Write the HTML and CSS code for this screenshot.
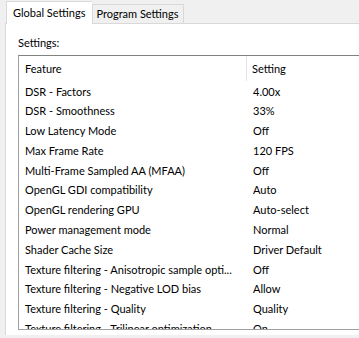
FILE: index.html
```html
<!DOCTYPE html>
<html>
<head>
<meta charset="utf-8">
<link rel="stylesheet" href="styles.css">
</head>
<body>
<div class="window">
  <div class="tabs">
    <div class="tab active">Global Settings</div>
    <div class="tab">Program Settings</div>
  </div>
  <div class="panel">
    <div class="label">Settings:</div>
    <div class="list">
      <div class="row header"><div class="c1">Feature</div><div class="c2">Setting</div></div>
      <div class="row"><div class="c1">DSR - Factors</div><div class="c2">4.00x</div></div>
      <div class="row"><div class="c1">DSR - Smoothness</div><div class="c2">33%</div></div>
      <div class="row"><div class="c1">Low Latency Mode</div><div class="c2">Off</div></div>
      <div class="row"><div class="c1">Max Frame Rate</div><div class="c2">120 FPS</div></div>
      <div class="row"><div class="c1">Multi-Frame Sampled AA (MFAA)</div><div class="c2">Off</div></div>
      <div class="row"><div class="c1">OpenGL GDI compatibility</div><div class="c2">Auto</div></div>
      <div class="row"><div class="c1">OpenGL rendering GPU</div><div class="c2">Auto-select</div></div>
      <div class="row"><div class="c1">Power management mode</div><div class="c2">Normal</div></div>
      <div class="row"><div class="c1">Shader Cache Size</div><div class="c2">Driver Default</div></div>
      <div class="row"><div class="c1">Texture filtering - Anisotropic sample opti...</div><div class="c2">Off</div></div>
      <div class="row"><div class="c1">Texture filtering - Negative LOD bias</div><div class="c2">Allow</div></div>
      <div class="row"><div class="c1">Texture filtering - Quality</div><div class="c2">Quality</div></div>
      <div class="row"><div class="c1">Texture filtering - Trilinear optimization</div><div class="c2">On</div></div>
    </div>
  </div>
</div>
</body>
</html>
```
FILE: styles.css
```css
html, body {
  margin: 0;
  padding: 0;
  background: #f0f0f0;
  overflow: hidden;
  width: 359px;
  height: 338px;
}
.window {
  font-family: Lato, "Open Sans", sans-serif;
  font-size: 11px;
  color: #000;
  padding-left: 5px;
  height: 338px;
  box-sizing: border-box;
}
.tabs {
  display: flex;
  align-items: flex-end;
  height: 24px;
  padding-left: 1px;
  border-bottom: 1px solid #d9d9d9;
  box-sizing: border-box;
}
.tab {
  height: 19px;
  line-height: 17px;
  padding: 0 5px 0 3px;
  border: 1px solid #d9d9d9;
  border-bottom: none;
  background: #f0f0f0;
  box-sizing: border-box;
}
.tab.active {
  background: #fff;
  height: 23px;
  margin-bottom: -1px;
  line-height: 22px;
  padding: 0 7px 0 6px;
  border-right: none;
}
.panel {
  background: #fff;
  border-left: 1px solid #d9d9d9;
  height: 311px;
  padding: 11px 0 0 12px;
  box-sizing: border-box;
}
.label {
  height: 20px;
  line-height: 16px;
}
.list {
  width: 341px;
  height: 275px;
  border: 1px solid #a0a0a0;
  border-top-color: #828282;
  border-right: none;
  box-sizing: border-box;
  overflow: hidden;
}
.row {
  display: flex;
  height: 19.8px;
  line-height: 19.8px;
  white-space: nowrap;
}
.row.header {
  height: 25px;
  line-height: 25px;
  margin-bottom: 0.5px;
}
.c1 {
  width: 228px;
  flex: none;
  padding-left: 6px;
  box-sizing: border-box;
  overflow: hidden;
}
.c2 {
  padding-left: 6px;
}
.header .c1 {
  border-right: 1px solid #e5e5e5;
}
.header .c2 {
  padding-left: 5px;
}
```
